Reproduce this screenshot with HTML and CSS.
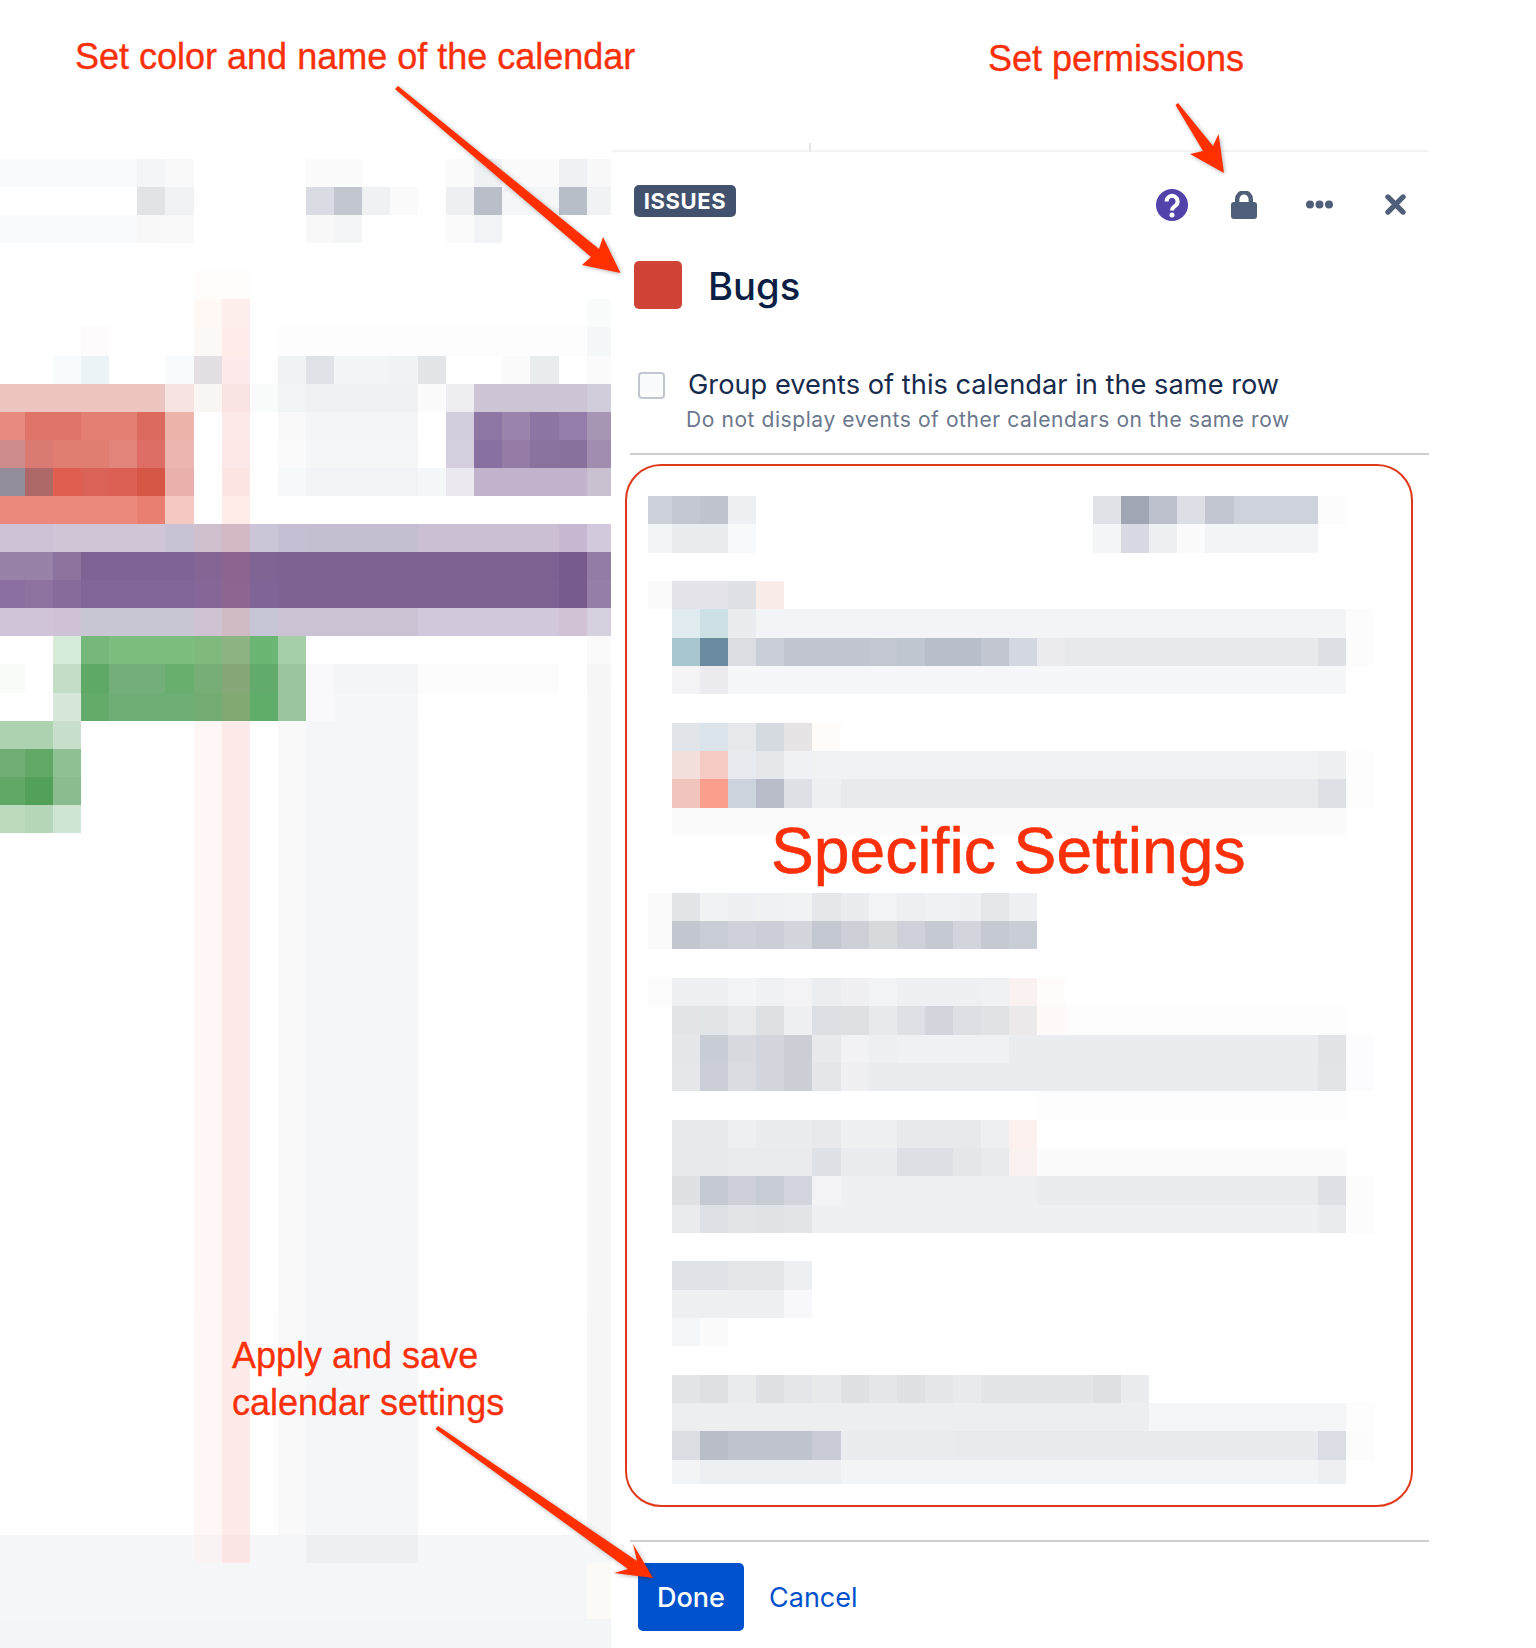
FILE: index.html
```html
<!DOCTYPE html>
<html lang="en">
<head>
<meta charset="utf-8">
<title>Calendar settings</title>
<link rel="stylesheet" href="styles.css">
</head>
<body>
<main class="stage">
  <svg class="backdrop" viewBox="0.107 -5.662 21.76 58.69" preserveAspectRatio="none" shape-rendering="crispEdges" aria-hidden="true">
    <path fill="#fff7f5" d="M7 4h1v45h-1z"/>
    <path fill="#fdebe9" d="M8 4h1v45h-1z"/>
    <path fill="#f9f9fa" d="M10 6h1v43h-1z"/>
    <path fill="#f5f6f8" d="M11 6h4v43h-4z"/>
    <path fill="#fefefe" d="M15 18h5v31h-5z"/>
    <path fill="#f7f7f8" d="M21 5h1v44h-1z"/>
    <path fill="#fefefe" d="M0 41h7v8h-7zM9 41h1v8h-1zM15 41h6v8h-6z"/>
    <path fill="#f9fafb" d="M0 0h5v1h-5zM0 2h5v1h-5z"/>
    <path fill="#f4f5f7" d="M5 0h1v1h-1zM12 2h1v1h-1z"/>
    <path fill="#f9f9fa" d="M6 0h1v1h-1zM6 2h1v1h-1z"/>
    <path fill="#fbfbfc" d="M11 0h2v1h-2zM18 0h2v1h-2z"/>
    <path fill="#fafafa" d="M16 0h1v1h-1zM16 2h1v1h-1z"/>
    <path fill="#f0f1f5" d="M17 0h1v1h-1zM20 0h1v1h-1z"/>
    <path fill="#f8f8f8" d="M21 0h1v1h-1zM11 2h1v1h-1zM5 2h1v1h-1z"/>
    <path fill="#f2f3f6" d="M17 2h1v1h-1z"/>
    <path fill="#e1e3e7" d="M5 1h1v1h-1z"/>
    <path fill="#f1f2f4" d="M6 1h1v1h-1zM21 1h1v1h-1z"/>
    <path fill="#d9dce2" d="M11 1h1v1h-1z"/>
    <path fill="#c1c6cf" d="M12 1h1v1h-1z"/>
    <path fill="#f0f1f3" d="M13 1h1v1h-1z"/>
    <path fill="#fbfbfb" d="M14 1h1v1h-1z"/>
    <path fill="#eeeff2" d="M16 1h1v1h-1z"/>
    <path fill="#b9bec9" d="M17 1h1v1h-1z"/>
    <path fill="#f5f6f8" d="M18 1h2v1h-2z"/>
    <path fill="#b7bec8" d="M20 1h1v1h-1z"/>
    <path fill="#fffcfb" d="M7 4h2v1h-2z"/>
    <path fill="#fff8f5" d="M7 5h1v1h-1z"/>
    <path fill="#feeeeb" d="M8 5h1v1h-1z"/>
    <path fill="#fafbfb" d="M21 5h1v1h-1z"/>
    <path fill="#fdfdfe" d="M10 6h11v1h-11z"/>
    <path fill="#fcf8f5" d="M7 6h1v1h-1z"/>
    <path fill="#fdecea" d="M8 6h1v1h-1z"/>
    <path fill="#fdfbfb" d="M3 6h1v1h-1z"/>
    <path fill="#f6f7f8" d="M21 6h1v1h-1z"/>
    <path fill="#fff" d="M10 7h12v12h-12zM7 9h1v4h-1zM9 9h1v4h-1z"/>
    <path fill="#f8fbfc" d="M2 7h1v1h-1z"/>
    <path fill="#ecf3f6" d="M3 7h1v1h-1z"/>
    <path fill="#f9fafb" d="M6 7h1v1h-1z"/>
    <path fill="#e3dfe3" d="M7 7h1v1h-1z"/>
    <path fill="#fdeaea" d="M8 7h1v1h-1z"/>
    <path fill="#f1f2f3" d="M10 7h1v1h-1z"/>
    <path fill="#dfe3e7" d="M11 7h1v1h-1z"/>
    <path fill="#f3f4f6" d="M12 7h2v1h-2z"/>
    <path fill="#f1f2f4" d="M14 7h1v1h-1z"/>
    <path fill="#e3e5e8" d="M15 7h1v1h-1z"/>
    <path fill="#fbfbfb" d="M18 7h1v1h-1zM21 7h1v1h-1z"/>
    <path fill="#e9ecec" d="M19 7h1v1h-1z"/>
    <path fill="#ecc4c0" d="M0 8h6v1h-6z"/>
    <path fill="#f5e4e2" d="M6 8h1v1h-1z"/>
    <path fill="#faf6f4" d="M7 8h1v1h-1z"/>
    <path fill="#fae4e3" d="M8 8h1v1h-1z"/>
    <path fill="#fafbfb" d="M9 8h1v1h-1z"/>
    <path fill="#f2f3f4" d="M10 8h1v1h-1z"/>
    <path fill="#f0f1f3" d="M11 8h4v1h-4z"/>
    <path fill="#fbfbfb" d="M15 8h1v1h-1z"/>
    <path fill="#eeedf2" d="M16 8h1v1h-1z"/>
    <path fill="#cdc5d6" d="M17 8h4v1h-4z"/>
    <path fill="#d2cdda" d="M21 8h1v1h-1z"/>
    <path fill="#e88a80" d="M0 9h1v1h-1z"/>
    <path fill="#e07468" d="M1 9h2v1h-2z"/>
    <path fill="#e27f72" d="M3 9h2v1h-2z"/>
    <path fill="#dc6a5f" d="M5 9h1v1h-1z"/>
    <path fill="#ecb4ab" d="M6 9h1v1h-1z"/>
    <path fill="#fde9e7" d="M8 9h1v1h-1z"/>
    <path fill="#f9f9f9" d="M10 9h1v1h-1z"/>
    <path fill="#f4f5f6" d="M11 9h4v1h-4z"/>
    <path fill="#d4cddd" d="M16 9h1v1h-1z"/>
    <path fill="#8e77a5" d="M17 9h1v1h-1z"/>
    <path fill="#9a84ab" d="M18 9h1v1h-1z"/>
    <path fill="#8d76a3" d="M19 9h1v1h-1z"/>
    <path fill="#947cab" d="M20 9h1v1h-1z"/>
    <path fill="#a795b5" d="M21 9h1v1h-1z"/>
    <path fill="#ce8b8c" d="M0 10h1v1h-1z"/>
    <path fill="#d97a73" d="M1 10h1v1h-1z"/>
    <path fill="#e17e72" d="M2 10h2v1h-2z"/>
    <path fill="#e28479" d="M4 10h1v1h-1z"/>
    <path fill="#dd6d65" d="M5 10h1v1h-1z"/>
    <path fill="#ecb6b0" d="M6 10h1v1h-1z"/>
    <path fill="#fde8e7" d="M8 10h1v1h-1z"/>
    <path fill="#fafafa" d="M10 10h1v1h-1z"/>
    <path fill="#f5f6f8" d="M11 10h4v1h-4z"/>
    <path fill="#d5cede" d="M16 10h1v1h-1z"/>
    <path fill="#8871a0" d="M17 10h1v1h-1z"/>
    <path fill="#947ca7" d="M18 10h1v1h-1z"/>
    <path fill="#8a729e" d="M19 10h1v1h-1z"/>
    <path fill="#89719d" d="M20 10h1v1h-1z"/>
    <path fill="#a08db0" d="M21 10h1v1h-1z"/>
    <path fill="#938c99" d="M0 11h1v1h-1z"/>
    <path fill="#ae6868" d="M1 11h1v1h-1z"/>
    <path fill="#e05e50" d="M2 11h1v1h-1z"/>
    <path fill="#da6256" d="M3 11h1v1h-1z"/>
    <path fill="#dc6053" d="M4 11h1v1h-1z"/>
    <path fill="#d65646" d="M5 11h1v1h-1z"/>
    <path fill="#e9b0ab" d="M6 11h1v1h-1z"/>
    <path fill="#fce5e3" d="M8 11h1v1h-1z"/>
    <path fill="#f7f8f9" d="M10 11h1v1h-1z"/>
    <path fill="#f2f3f6" d="M11 11h4v1h-4z"/>
    <path fill="#f6f7f9" d="M15 11h1v1h-1z"/>
    <path fill="#ebe8f0" d="M16 11h1v1h-1z"/>
    <path fill="#c0b3cb" d="M17 11h4v1h-4z"/>
    <path fill="#c9c0d0" d="M21 11h1v1h-1z"/>
    <path fill="#ea897c" d="M0 12h5v1h-5z"/>
    <path fill="#e97f70" d="M5 12h1v1h-1z"/>
    <path fill="#f5c8c1" d="M6 12h1v1h-1z"/>
    <path fill="#fdece8" d="M8 12h1v1h-1z"/>
    <path fill="#cdc2d5" d="M0 13h2v1h-2z"/>
    <path fill="#cfc5d7" d="M2 13h4v1h-4z"/>
    <path fill="#c9c2d4" d="M6 13h1v1h-1z"/>
    <path fill="#d0bfcd" d="M7 13h1v1h-1z"/>
    <path fill="#d3b9c6" d="M8 13h1v1h-1z"/>
    <path fill="#ccc5d7" d="M9 13h1v1h-1z"/>
    <path fill="#c6bed2" d="M10 13h1v1h-1z"/>
    <path fill="#c5bed1" d="M11 13h4v1h-4z"/>
    <path fill="#cbbfd4" d="M15 13h5v1h-5z"/>
    <path fill="#c6b8d0" d="M20 13h1v1h-1z"/>
    <path fill="#d2cadc" d="M21 13h1v1h-1z"/>
    <path fill="#9882a8" d="M0 14h2v1h-2z"/>
    <path fill="#8c749f" d="M2 14h1v1h-1z"/>
    <path fill="#7e6494" d="M3 14h4v1h-4z"/>
    <path fill="#846593" d="M7 14h1v1h-1z"/>
    <path fill="#8b6590" d="M8 14h1v1h-1z"/>
    <path fill="#7e6594" d="M9 14h1v1h-1z"/>
    <path fill="#7c6291" d="M10 14h10v1h-10z"/>
    <path fill="#785b8d" d="M20 14h1v2h-1z"/>
    <path fill="#937ca5" d="M21 14h1v1h-1z"/>
    <path fill="#8b6fa0" d="M0 15h1v1h-1z"/>
    <path fill="#8e73a1" d="M1 15h1v1h-1z"/>
    <path fill="#866c9a" d="M2 15h1v1h-1z"/>
    <path fill="#806596" d="M3 15h4v1h-4z"/>
    <path fill="#866696" d="M7 15h1v1h-1z"/>
    <path fill="#8c6690" d="M8 15h1v1h-1z"/>
    <path fill="#7e6595" d="M9 15h1v1h-1z"/>
    <path fill="#7c6391" d="M10 15h10v1h-10z"/>
    <path fill="#957fa8" d="M21 15h1v1h-1z"/>
    <path fill="#d0c5d8" d="M0 16h2v1h-2z"/>
    <path fill="#d0c2d6" d="M2 16h1v1h-1z"/>
    <path fill="#c9c6d4" d="M3 16h4v1h-4z"/>
    <path fill="#cfc3d2" d="M7 16h1v1h-1z"/>
    <path fill="#d0bac6" d="M8 16h1v1h-1z"/>
    <path fill="#c6c5d6" d="M9 16h1v1h-1z"/>
    <path fill="#cbc2d4" d="M10 16h5v1h-5z"/>
    <path fill="#d1c9db" d="M15 16h5v1h-5z"/>
    <path fill="#d1c2d5" d="M20 16h1v1h-1z"/>
    <path fill="#d7d0df" d="M21 16h1v1h-1z"/>
    <path fill="#d7ebd9" d="M2 17h1v1h-1z"/>
    <path fill="#76b87b" d="M3 17h1v1h-1z"/>
    <path fill="#7dbd7f" d="M4 17h3v1h-3z"/>
    <path fill="#7fb97e" d="M7 17h1v1h-1z"/>
    <path fill="#8db382" d="M8 17h1v1h-1z"/>
    <path fill="#6bb674" d="M9 17h1v1h-1z"/>
    <path fill="#a5cfa6" d="M10 17h1v1h-1z"/>
    <path fill="#fafafa" d="M21 17h1v1h-1z"/>
    <path fill="#f9fbf9" d="M0 18h1v1h-1z"/>
    <path fill="#c2dcc6" d="M2 18h1v1h-1z"/>
    <path fill="#60a866" d="M3 18h1v1h-1z"/>
    <path fill="#74af79" d="M4 18h2v1h-2z"/>
    <path fill="#68ae6f" d="M6 18h1v1h-1z"/>
    <path fill="#77ae78" d="M7 18h1v1h-1z"/>
    <path fill="#86a878" d="M8 18h1v1h-1z"/>
    <path fill="#63ab6d" d="M9 18h1v1h-1z"/>
    <path fill="#9bc59e" d="M10 18h1v2h-1z"/>
    <path fill="#f9f8fb" d="M11 18h1v2h-1z"/>
    <path fill="#f4f5f7" d="M12 18h3v1h-3z"/>
    <path fill="#fcfcfd" d="M15 18h5v1h-5z"/>
    <path fill="#f6f6f7" d="M21 18h1v1h-1z"/>
    <path fill="#d7e8da" d="M2 19h1v1h-1z"/>
    <path fill="#63aa6b" d="M3 19h1v1h-1z"/>
    <path fill="#6cae73" d="M4 19h3v1h-3z"/>
    <path fill="#72ac72" d="M7 19h1v1h-1z"/>
    <path fill="#82a874" d="M8 19h1v1h-1z"/>
    <path fill="#60ac6b" d="M9 19h1v1h-1z"/>
    <path fill="#f6f7f8" d="M12 19h3v1h-3z"/>
    <path fill="#f7f7f8" d="M21 19h1v1h-1z"/>
    <path fill="#add2b0" d="M0 20h2v1h-2z"/>
    <path fill="#c8e0cb" d="M2 20h1v1h-1z"/>
    <path fill="#70ad75" d="M0 21h1v1h-1z"/>
    <path fill="#62a968" d="M1 21h1v1h-1z"/>
    <path fill="#8fc094" d="M2 21h1v1h-1z"/>
    <path fill="#61a867" d="M0 22h1v1h-1z"/>
    <path fill="#52a059" d="M1 22h1v1h-1z"/>
    <path fill="#8abc8f" d="M2 22h1v1h-1z"/>
    <path fill="#bcdabe" d="M0 23h1v1h-1z"/>
    <path fill="#b5d6b8" d="M1 23h1v1h-1z"/>
    <path fill="#d0e4d3" d="M2 23h1v1h-1z"/>
    <path fill="#f6f7f8" d="M0 49h22v1h-22z"/>
    <path fill="#f9f4f3" d="M7 49h1v1h-1z"/>
    <path fill="#fbe6e5" d="M8 49h1v1h-1z"/>
    <path fill="#eeeff1" d="M11 49h4v1h-4z"/>
    <path fill="#f5f6f8" d="M0 50h22v2h-22z"/>
    <path fill="#fbfaf7" d="M21 50h1v2h-1z"/>
    <path fill="#f4f5f7" d="M0 52h22v8h-22z"/>
  </svg>

  <section class="panel">
    <span class="panel-tick"></span>
    <header class="panel-head">
      <span class="badge">ISSUES</span>
      <div class="tools">
        <svg class="tool tool-help" viewBox="0 0 32 32" aria-hidden="true"><circle cx="16" cy="16" r="16" fill="#5243aa"/><path d="M10.6 12.4a5.5 5.5 0 1 1 8.6 4.5c-2 1.3-3.2 2.2-3.2 4.6" fill="none" stroke="#fff" stroke-width="4"/><circle cx="16" cy="26" r="2.5" fill="#fff"/></svg>
        <svg class="tool tool-lock" viewBox="0 0 26 28" aria-hidden="true"><path d="M6.2 13V8.2a6.8 6.8 0 0 1 13.6 0V13" fill="none" stroke="#505f79" stroke-width="4.4"/><rect y="11" width="26" height="17" rx="3" fill="#505f79"/></svg>
        <svg class="tool tool-dots" viewBox="0 0 27 9" aria-hidden="true"><circle cx="4" cy="4.5" r="4" fill="#505f79"/><circle cx="13.5" cy="4.5" r="4" fill="#505f79"/><circle cx="23" cy="4.5" r="4" fill="#505f79"/></svg>
        <svg class="tool tool-close" viewBox="0 0 20 20" aria-hidden="true"><path d="M2.8 2.8l14.4 14.4M17.2 2.8L2.8 17.2" fill="none" stroke="#505f79" stroke-width="5" stroke-linecap="round"/></svg>
      </div>
    </header>
    <div class="title-row">
      <span class="swatch"></span>
      <h1 class="title">Bugs</h1>
    </div>
    <div class="check-row">
      <span class="checkbox"></span>
      <div class="check-text">
        <div class="check-label">Group events of this calendar in the same row</div>
        <div class="check-hint">Do not display events of other calendars on the same row</div>
      </div>
    </div>
    <hr class="rule rule-top">
    <div class="settings">
      <svg class="blur" viewBox="0.14 0 26.86 35" preserveAspectRatio="none" shape-rendering="crispEdges" aria-hidden="true">
        <path fill="#cdd1da" d="M0 0h1v1h-1z"/>
        <path fill="#c3c7d1" d="M1 0h1v1h-1z"/>
        <path fill="#bfc4cf" d="M2 0h1v1h-1z"/>
        <path fill="#eff0f4" d="M3 0h1v1h-1zM18 1h1v1h-1z"/>
        <path fill="#e0e2e8" d="M16 0h1v1h-1z"/>
        <path fill="#a0a6b3" d="M17 0h1v1h-1z"/>
        <path fill="#bbc0cc" d="M18 0h1v1h-1z"/>
        <path fill="#dcdfe5" d="M19 0h1v1h-1z"/>
        <path fill="#c2c6d0" d="M20 0h1v1h-1z"/>
        <path fill="#ced2da" d="M21 0h3v1h-3z"/>
        <path fill="#fcfcfc" d="M24 0h1v1h-1z"/>
        <path fill="#f3f4f6" d="M0 1h1v1h-1zM20 1h4v1h-4z"/>
        <path fill="#ebecf0" d="M1 1h2v1h-2z"/>
        <path fill="#f8f9fb" d="M3 1h1v1h-1z"/>
        <path fill="#f4f5f7" d="M16 1h1v1h-1z"/>
        <path fill="#d8dae3" d="M17 1h1v1h-1z"/>
        <path fill="#fbfbfb" d="M19 1h1v1h-1z"/>
        <path fill="#fbfbfc" d="M0 3h1v1h-1z"/>
        <path fill="#e3e3e9" d="M1 3h2v1h-2z"/>
        <path fill="#dfe1e7" d="M3 3h1v1h-1z"/>
        <path fill="#f9ece9" d="M4 3h1v1h-1z"/>
        <path fill="#dfebef" d="M1 4h1v1h-1z"/>
        <path fill="#cde0e4" d="M2 4h1v1h-1z"/>
        <path fill="#ebecf0" d="M3 4h1v1h-1z"/>
        <path fill="#f3f4f6" d="M4 4h21v1h-21z"/>
        <path fill="#fcfcfd" d="M25 4h1v2h-1z"/>
        <path fill="#a8c6d0" d="M1 5h1v1h-1z"/>
        <path fill="#6b8ba0" d="M2 5h1v1h-1z"/>
        <path fill="#dcdde3" d="M3 5h1v1h-1z"/>
        <path fill="#c9ced7" d="M4 5h1v1h-1z"/>
        <path fill="#c0c5cf" d="M5 5h3v1h-3z"/>
        <path fill="#c2c7d0" d="M8 5h1v1h-1z"/>
        <path fill="#c0c6d0" d="M9 5h1v1h-1z"/>
        <path fill="#b8bfca" d="M10 5h2v1h-2z"/>
        <path fill="#c1c6d0" d="M12 5h1v1h-1z"/>
        <path fill="#d3d7e0" d="M13 5h1v1h-1z"/>
        <path fill="#ebebef" d="M14 5h1v1h-1z"/>
        <path fill="#e8e9ed" d="M15 5h9v1h-9z"/>
        <path fill="#dcdfe4" d="M24 5h1v1h-1z"/>
        <path fill="#f4f4f6" d="M1 6h1v1h-1z"/>
        <path fill="#ecebef" d="M2 6h1v1h-1z"/>
        <path fill="#f6f7f8" d="M3 6h22v1h-22z"/>
        <path fill="#e1e5ea" d="M1 8h1v1h-1z"/>
        <path fill="#dae4ea" d="M2 8h1v1h-1z"/>
        <path fill="#e7e8ec" d="M3 8h1v1h-1z"/>
        <path fill="#d5dae1" d="M4 8h1v1h-1z"/>
        <path fill="#e7e4e6" d="M5 8h1v1h-1z"/>
        <path fill="#fffbf9" d="M6 8h1v1h-1z"/>
        <path fill="#f3e0dd" d="M1 9h1v1h-1z"/>
        <path fill="#f6cbc4" d="M2 9h1v1h-1z"/>
        <path fill="#e7eaee" d="M3 9h1v1h-1z"/>
        <path fill="#e6e7eb" d="M4 9h1v1h-1z"/>
        <path fill="#f0f1f4" d="M5 9h1v1h-1z"/>
        <path fill="#f1f2f4" d="M6 9h18v1h-18z"/>
        <path fill="#eff0f2" d="M24 9h1v1h-1z"/>
        <path fill="#fdfdfd" d="M25 9h1v2h-1z"/>
        <path fill="#f1c4be" d="M1 10h1v1h-1z"/>
        <path fill="#fb9f8c" d="M2 10h1v1h-1z"/>
        <path fill="#ccd3dd" d="M3 10h1v1h-1z"/>
        <path fill="#b8bcc8" d="M4 10h1v1h-1z"/>
        <path fill="#dfe0e6" d="M5 10h1v1h-1z"/>
        <path fill="#eeeff2" d="M6 10h1v1h-1z"/>
        <path fill="#e9eaee" d="M7 10h17v1h-17z"/>
        <path fill="#dde0e5" d="M24 10h1v1h-1z"/>
        <path fill="#fbfbfc" d="M1 11h24v1h-24z"/>
        <path fill="#fbfbfc" d="M0 14h1v2h-1z"/>
        <path fill="#e4e5e9" d="M1 14h1v1h-1z"/>
        <path fill="#f1f2f4" d="M2 14h1v1h-1zM5 14h1v1h-1z"/>
        <path fill="#eff0f3" d="M3 14h1v1h-1zM11 14h1v1h-1z"/>
        <path fill="#f0f1f3" d="M4 14h1v1h-1zM10 14h1v1h-1z"/>
        <path fill="#e6e7ea" d="M6 14h1v1h-1zM12 14h1v1h-1z"/>
        <path fill="#ebecef" d="M7 14h1v1h-1z"/>
        <path fill="#f2f3f5" d="M8 14h1v1h-1z"/>
        <path fill="#eeeff2" d="M9 14h1v1h-1zM13 14h1v1h-1z"/>
        <path fill="#c2c6cf" d="M1 15h1v1h-1z"/>
        <path fill="#c9cdd5" d="M2 15h1v1h-1zM13 15h1v1h-1z"/>
        <path fill="#ced1d9" d="M3 15h1v1h-1zM9 15h1v1h-1z"/>
        <path fill="#cbced7" d="M4 15h1v1h-1z"/>
        <path fill="#d3d6dd" d="M5 15h1v1h-1z"/>
        <path fill="#c3c8d1" d="M6 15h1v1h-1z"/>
        <path fill="#cdd0d7" d="M7 15h1v1h-1z"/>
        <path fill="#d7dadd" d="M8 15h1v1h-1z"/>
        <path fill="#c5c9d2" d="M10 15h1v1h-1zM12 15h1v1h-1z"/>
        <path fill="#d2d5dc" d="M11 15h1v1h-1z"/>
        <path fill="#fcfcfd" d="M0 17h1v1h-1z"/>
        <path fill="#eff0f3" d="M1 17h2v1h-2zM9 17h3v1h-3z"/>
        <path fill="#f3f4f5" d="M3 17h1v1h-1z"/>
        <path fill="#f0f1f3" d="M4 17h1v1h-1zM12 17h1v1h-1z"/>
        <path fill="#f3f3f5" d="M5 17h1v1h-1z"/>
        <path fill="#ecedf0" d="M6 17h1v1h-1z"/>
        <path fill="#f0f0f3" d="M7 17h1v1h-1z"/>
        <path fill="#f2f3f4" d="M8 17h1v1h-1z"/>
        <path fill="#f9f2f0" d="M13 17h1v1h-1z"/>
        <path fill="#fffbfa" d="M14 17h1v1h-1z"/>
        <path fill="#e3e4e7" d="M1 18h1v1h-1z"/>
        <path fill="#e1e5e8" d="M2 18h1v1h-1z"/>
        <path fill="#e9eaec" d="M3 18h1v1h-1z"/>
        <path fill="#dee1e4" d="M4 18h1v1h-1z"/>
        <path fill="#eff0f2" d="M5 18h1v1h-1z"/>
        <path fill="#dcdfe3" d="M6 18h1v1h-1z"/>
        <path fill="#dee0e3" d="M7 18h1v1h-1z"/>
        <path fill="#e8e9eb" d="M8 18h1v1h-1z"/>
        <path fill="#dde0e4" d="M9 18h1v1h-1z"/>
        <path fill="#d2d5dc" d="M10 18h1v1h-1z"/>
        <path fill="#dcdfe4" d="M11 18h1v1h-1z"/>
        <path fill="#e0e3e6" d="M12 18h1v1h-1z"/>
        <path fill="#ece9ea" d="M13 18h1v1h-1z"/>
        <path fill="#fffaf8" d="M14 18h1v1h-1z"/>
        <path fill="#fdfdfe" d="M15 18h10v1h-10zM14 21h11v1h-11z"/>
        <path fill="#e5e6e9" d="M1 19h1v1h-1z"/>
        <path fill="#c8ccd4" d="M2 19h1v1h-1z"/>
        <path fill="#d8dae0" d="M3 19h1v1h-1z"/>
        <path fill="#d2d5dc" d="M4 19h1v1h-1z"/>
        <path fill="#cbcfd5" d="M5 19h1v1h-1z"/>
        <path fill="#e8e9ed" d="M6 19h1v1h-1z"/>
        <path fill="#f2f2f5" d="M7 19h1v1h-1z"/>
        <path fill="#eeeff2" d="M8 19h1v1h-1z"/>
        <path fill="#f0f1f4" d="M9 19h4v1h-4z"/>
        <path fill="#ebecef" d="M13 19h11v1h-11z"/>
        <path fill="#e2e3e7" d="M24 19h1v1h-1z"/>
        <path fill="#fcfcfe" d="M25 19h1v2h-1z"/>
        <path fill="#e6e7ea" d="M1 20h1v1h-1z"/>
        <path fill="#cbced6" d="M2 20h1v1h-1z"/>
        <path fill="#dadce1" d="M3 20h1v1h-1z"/>
        <path fill="#d3d6dc" d="M4 20h1v1h-1z"/>
        <path fill="#ccd0d6" d="M5 20h1v1h-1z"/>
        <path fill="#e5e6ea" d="M6 20h1v1h-1z"/>
        <path fill="#f0f0f3" d="M7 20h1v1h-1z"/>
        <path fill="#ebecef" d="M8 20h16v1h-16z"/>
        <path fill="#e3e4e8" d="M24 20h1v1h-1z"/>
        <path fill="#e8e9ed" d="M1 22h2v1h-2zM9 22h3v1h-3z"/>
        <path fill="#eeeff2" d="M3 22h1v1h-1zM12 22h1v1h-1z"/>
        <path fill="#ebecef" d="M4 22h2v1h-2z"/>
        <path fill="#e8e9ec" d="M6 22h1v1h-1zM1 23h2v1h-2z"/>
        <path fill="#eff0f2" d="M7 22h2v1h-2z"/>
        <path fill="#fdf1ef" d="M13 22h1v1h-1z"/>
        <path fill="#eaebee" d="M3 23h3v1h-3zM7 23h2v1h-2z"/>
        <path fill="#dee1e5" d="M6 23h1v1h-1z"/>
        <path fill="#dddfe4" d="M9 23h2v1h-2z"/>
        <path fill="#e5e6ea" d="M11 23h1v1h-1z"/>
        <path fill="#e9eaee" d="M12 23h1v1h-1z"/>
        <path fill="#f9f2f0" d="M13 23h1v1h-1z"/>
        <path fill="#fbfbfc" d="M14 23h11v1h-11z"/>
        <path fill="#e0e1e5" d="M1 24h1v1h-1z"/>
        <path fill="#c5c9d2" d="M2 24h1v1h-1z"/>
        <path fill="#cdd0d8" d="M3 24h1v1h-1z"/>
        <path fill="#c7cbd4" d="M4 24h1v1h-1z"/>
        <path fill="#d2d5dd" d="M5 24h1v1h-1z"/>
        <path fill="#f3f3f5" d="M6 24h1v1h-1z"/>
        <path fill="#eff0f3" d="M7 24h7v1h-7zM6 25h18v1h-18z"/>
        <path fill="#ebecf0" d="M14 24h10v1h-10z"/>
        <path fill="#dfe1e6" d="M24 24h1v1h-1z"/>
        <path fill="#fcfcfd" d="M25 24h1v2h-1z"/>
        <path fill="#eaebee" d="M1 25h1v1h-1zM24 25h1v1h-1z"/>
        <path fill="#dde0e4" d="M2 25h1v1h-1z"/>
        <path fill="#e3e4e7" d="M3 25h1v1h-1z"/>
        <path fill="#e0e2e6" d="M4 25h1v1h-1z"/>
        <path fill="#e4e5e8" d="M5 25h1v1h-1z"/>
        <path fill="#dfe2e6" d="M1 27h2v1h-2z"/>
        <path fill="#e4e6e9" d="M3 27h2v1h-2z"/>
        <path fill="#eeeff2" d="M5 27h1v1h-1z"/>
        <path fill="#eeeff1" d="M1 28h4v1h-4z"/>
        <path fill="#f8f8fa" d="M5 28h1v1h-1z"/>
        <path fill="#f5f6f7" d="M1 29h1v1h-1zM18 32h7v1h-7z"/>
        <path fill="#fbfbfb" d="M2 29h1v1h-1z"/>
        <path fill="#e4e5e8" d="M1 31h1v1h-1z"/>
        <path fill="#dee0e4" d="M2 31h1v1h-1z"/>
        <path fill="#eaebed" d="M3 31h1v1h-1z"/>
        <path fill="#dfe1e5" d="M4 31h1v1h-1zM7 31h1v1h-1zM9 31h1v1h-1z"/>
        <path fill="#e5e6e9" d="M5 31h1v1h-1zM8 31h1v1h-1zM10 31h1v1h-1z"/>
        <path fill="#e8e9eb" d="M6 31h1v1h-1z"/>
        <path fill="#e9eaec" d="M11 31h1v1h-1z"/>
        <path fill="#e3e5e8" d="M12 31h4v1h-4z"/>
        <path fill="#dfe0e4" d="M16 31h1v1h-1z"/>
        <path fill="#ebecef" d="M17 31h1v1h-1z"/>
        <path fill="#edeef0" d="M1 32h17v1h-17z"/>
        <path fill="#fdfdfd" d="M25 32h1v1h-1z"/>
        <path fill="#dcdde2" d="M1 33h1v1h-1z"/>
        <path fill="#b9bdc8" d="M2 33h1v1h-1z"/>
        <path fill="#c0c4ce" d="M3 33h3v1h-3z"/>
        <path fill="#c9ccd6" d="M6 33h1v1h-1z"/>
        <path fill="#ebecef" d="M7 33h4v1h-4z"/>
        <path fill="#e9eaee" d="M11 33h13v1h-13z"/>
        <path fill="#dadde3" d="M24 33h1v1h-1z"/>
        <path fill="#fcfcfc" d="M25 33h1v1h-1z"/>
        <path fill="#f3f4f6" d="M1 34h24v0.85h-24z"/>
        <path fill="#eeeff2" d="M2 34h5v0.85h-5zM24 34h1v0.85h-1z"/>
      </svg>
      <div class="note note-specific">Specific Settings</div>
    </div>
    <hr class="rule rule-bottom">
    <footer class="actions">
      <button class="btn-done" type="button">Done</button>
      <button class="btn-cancel" type="button">Cancel</button>
    </footer>
  </section>

  <svg class="arrows" viewBox="0 0 1536 1648" aria-hidden="true">
    <polygon points="395,89 398,86 599,249 603,237 620.5,273 582,265 591,257"/>
    <polygon points="1175.5,105 1178,103 1213,146 1218.6,134 1224,173 1190,154 1203,151"/>
    <polygon points="435.5,1429 438,1426 637,1561 633,1544 653,1578 614,1573 628,1569"/>
  </svg>
  <div class="note note-name">Set color and name of the calendar</div>
  <div class="note note-perm">Set permissions</div>
  <div class="note note-apply">Apply and save<br>calendar settings</div>
</main>
</body>
</html>
```

FILE: styles.css
```css
* { box-sizing: border-box; }

html, body {
  margin: 0;
  padding: 0;
  background: #fff;
}

.stage {
  position: relative;
  display: flex;
  width: 1536px;
  height: 1648px;
  overflow: hidden;
  font-family: Inter, "Noto Sans", sans-serif;
}

.backdrop {
  flex: none;
  display: block;
  width: 611px;
  height: 1648px;
}

.panel {
  position: relative;
  flex: none;
  display: flex;
  flex-direction: column;
  width: 818px;
  height: 1498px;
  margin-top: 150px;
  padding-left: 19px;
  background: #fff;
  border-top: 2px solid #f3f3f3;
  border-top-left-radius: 4px;
}

.panel-tick {
  position: absolute;
  left: 198px;
  top: -9px;
  width: 2px;
  height: 8px;
  background: #e6e6e6;
}

.panel-head {
  display: flex;
  align-items: flex-start;
  justify-content: space-between;
  height: 32px;
  margin-top: 33px;
  padding: 0 23px 0 4px;
}

.badge {
  width: 102px;
  height: 32px;
  background: #42526e;
  border-radius: 5px;
  color: #fff;
  font-size: 22px;
  font-weight: 700;
  line-height: 32px;
  text-align: center;
  letter-spacing: 0.6px;
}

.tools {
  display: flex;
  align-items: center;
  margin-top: 4px;
}

.tool { display: block; flex: none; }
.tool-help { width: 32px; height: 32px; }
.tool-lock { width: 26px; height: 28px; margin-left: 43px; }
.tool-dots { width: 27px; height: 9px; margin: -2px 0 0 49px; }
.tool-close { width: 21px; height: 21px; margin: -2px 0 0 52px; }

.title-row {
  display: flex;
  align-items: flex-start;
  gap: 26px;
  margin-top: 44px;
  padding-left: 4px;
}

.swatch {
  flex: none;
  width: 48px;
  height: 48px;
  background: #d04437;
  border-radius: 5px;
}

.title {
  margin: 0;
  color: #0b1f45;
  font-size: 38.2px;
  font-weight: 500;
  line-height: 50px;
}

.check-row {
  display: flex;
  gap: 23px;
  margin-top: 61px;
  padding-left: 8px;
}

.checkbox {
  flex: none;
  width: 27px;
  height: 27px;
  background: #fafbfc;
  border: 2px solid #c1c7d0;
  border-radius: 4px;
}

.check-text { margin-top: -4px; }

.check-label {
  color: #172b4d;
  font-size: 27.25px;
  line-height: 34px;
}

.check-hint {
  margin-top: 3px;
  margin-left: -2px;
  color: #6b778c;
  font-size: 21px;
  line-height: 30px;
  letter-spacing: 0.58px;
}

.rule {
  flex: none;
  width: 799px;
  height: 2px;
  margin: 0;
  background: #cfcfcf;
  border: 0;
}

.rule-top { margin-top: 18px; }
.rule-bottom { margin-top: 33px; }

.settings {
  position: relative;
  flex: none;
  width: 788px;
  height: 1043px;
  margin: 9px 0 0 -5px;
  border: 2px solid #e0391a;
  border-radius: 36px;
}

.blur {
  position: absolute;
  left: 21px;
  top: 30px;
  display: block;
  width: 754px;
  height: 992px;
}

.actions {
  display: flex;
  align-items: center;
  gap: 25px;
  margin-top: 21px;
  padding-left: 8px;
}

.btn-done,
.btn-cancel {
  height: 68px;
  border: 0;
  font-family: inherit;
  font-size: 27px;
  font-weight: 500;
  padding: 0;
}

.btn-done {
  width: 106px;
  background: #0052cc;
  border-radius: 5px;
  color: #fff;
}

.btn-cancel {
  background: none;
  color: #0052cc;
  font-weight: 400;
}

.arrows {
  position: absolute;
  left: 0;
  top: 0;
  width: 1536px;
  height: 1648px;
  fill: #ff2f00;
  filter: drop-shadow(1px 1px 2px rgba(0, 0, 0, 0.3));
  pointer-events: none;
}

.note {
  position: absolute;
  color: #f9300a;
  font-family: "Liberation Sans", Arial, sans-serif;
  font-size: 36px;
  line-height: 40px;
  white-space: nowrap;
  -webkit-text-stroke: 0.35px #f9300a;
}

.note-name { left: 75px; top: 37px; }
.note-perm { left: 988px; top: 39px; }
.note-apply { left: 232px; top: 1333px; line-height: 46.5px; }

.note-specific {
  left: 144px;
  top: 350px;
  font-size: 64.2px;
  line-height: 70px;
  -webkit-text-stroke: 0.6px #f9300a;
}
```
